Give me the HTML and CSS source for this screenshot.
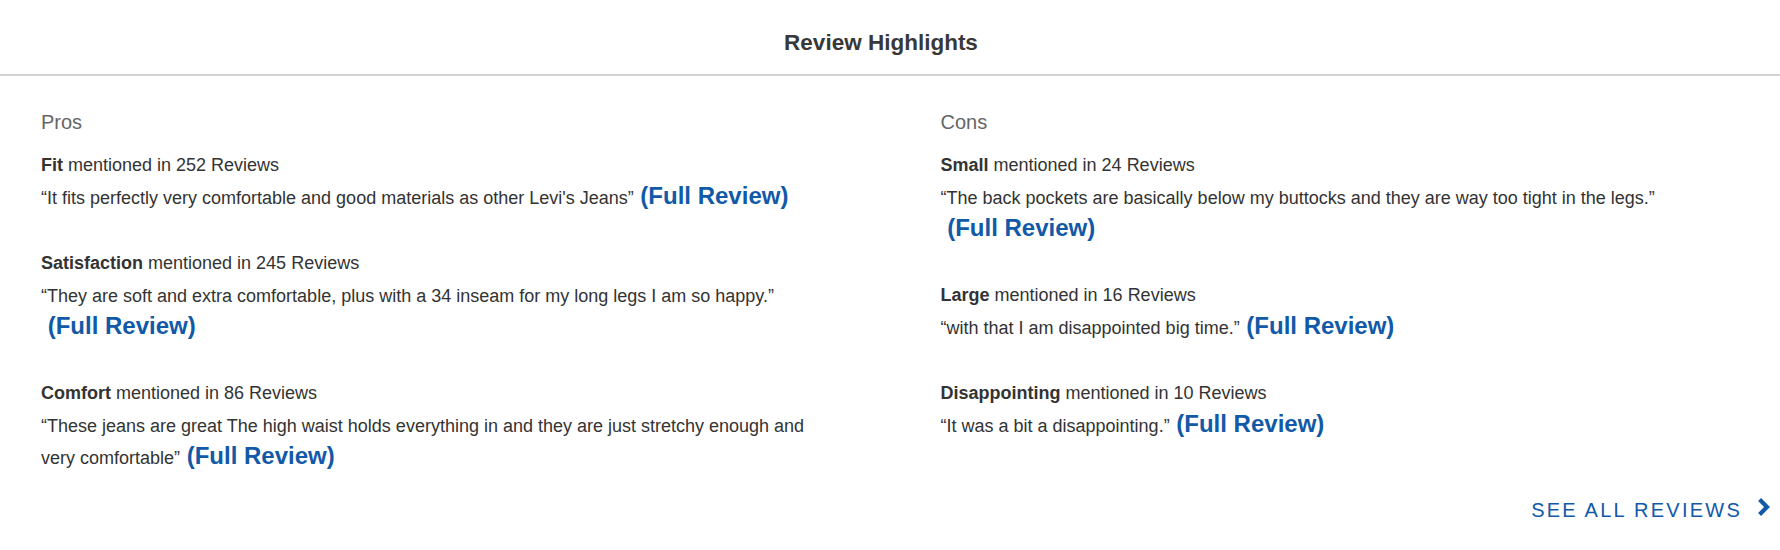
FILE: index.html
```html
<!DOCTYPE html>
<html lang="en">

  <head>
    <meta charset="UTF-8">
    <meta name="viewport" content="width=device-width, initial-scale=1.0">
    <title>Review Highlights</title>
    <link rel="stylesheet" href="styles.css">
  </head>

  <body>
    <div class="highlights">
      <h2 class="highlights-title">Review Highlights</h2>

      <div class="highlights-cols">
        <!-- pros column -->
        <div class="highlights-col">
          <h3 class="col-title">Pros</h3>

          <div class="topic">
            <p class="topic-head"><b>Fit</b> mentioned in 252 Reviews</p>
            <p class="topic-quote">“It fits perfectly very comfortable and good materials as other Levi's Jeans”<a class="full-review" href="#">&nbsp;(Full Review)</a></p>
          </div>

          <div class="topic">
            <p class="topic-head"><b>Satisfaction</b> mentioned in 245 Reviews</p>
            <p class="topic-quote">“They are soft and extra comfortable, plus with a 34 inseam for my long legs I am so happy.”<a class="full-review" href="#">&nbsp;(Full Review)</a></p>
          </div>

          <div class="topic">
            <p class="topic-head"><b>Comfort</b> mentioned in 86 Reviews</p>
            <p class="topic-quote">“These jeans are great The high waist holds everything in and they are just stretchy enough and very comfortable”<a class="full-review" href="#">&nbsp;(Full Review)</a></p>
          </div>
        </div>

        <!-- cons column -->
        <div class="highlights-col">
          <h3 class="col-title">Cons</h3>

          <div class="topic">
            <p class="topic-head"><b>Small</b> mentioned in 24 Reviews</p>
            <p class="topic-quote">“The back pockets are basically below my buttocks and they are way too tight in the legs.”<a class="full-review" href="#">&nbsp;(Full Review)</a></p>
          </div>

          <div class="topic">
            <p class="topic-head"><b>Large</b> mentioned in 16 Reviews</p>
            <p class="topic-quote">“with that I am disappointed big time.”<a class="full-review" href="#">&nbsp;(Full Review)</a></p>
          </div>

          <div class="topic">
            <p class="topic-head"><b>Disappointing</b> mentioned in 10 Reviews</p>
            <p class="topic-quote">“It was a bit a disappointing.”<a class="full-review" href="#">&nbsp;(Full Review)</a></p>
          </div>
        </div>
      </div>

      <div class="highlights-footer">
        <a class="see-all" href="#">
          <span>See all reviews</span>
          <svg class="chevron" width="14" height="18" viewBox="0 0 14 18">
            <polyline points="2.6,1.6 10,9 2.6,16.4" fill="none" stroke="currentColor" stroke-width="4.2" />
          </svg>
        </a>
      </div>
    </div>
  </body>

</html>
```

FILE: styles.css
```css
body {
  margin: 0;
  padding: 0;
  background: #fff;
  font-family: "Liberation Sans", Arial, sans-serif;
  color: #333;
}

.highlights-title {
  margin: 0;
  padding: 30px 18px 18px 0;
  font-size: 22.5px;
  line-height: 26px;
  font-weight: bold;
  text-align: center;
  color: #383838;
  border-bottom: 2px solid #d2d2d2;
}

.highlights-cols {
  display: grid;
  grid-template-columns: 1fr 1fr;
  column-gap: 102px;
  padding: 34px 42px 0 41px;
}

.col-title {
  margin: 0 0 16px;
  font-size: 20px;
  line-height: 24px;
  font-weight: normal;
  color: #666;
}

.topic {
  margin-bottom: 34px;
}

.topic:last-child {
  margin-bottom: 0;
}

.topic p {
  margin: 0;
  font-size: 18px;
}

.topic-head {
  line-height: 30px;
  margin-bottom: 2px !important;
}

.topic-quote {
  line-height: 32px;
}

/* inline-block so the link can drop to its own line */
.full-review {
  display: inline-block;
  font-size: 24px;
  line-height: 24px;
  font-weight: bold;
  color: #1259a8;
  text-decoration: none;
}

.highlights-footer {
  display: flex;
  justify-content: flex-end;
  padding: 24px 9px 0 0;
}

.see-all {
  display: flex;
  align-items: center;
  gap: 15px;
  font-size: 20px;
  line-height: 24px;
  letter-spacing: 2.25px;
  text-transform: uppercase;
  color: #1259a8;
  text-decoration: none;
}

.chevron {
  margin-bottom: 6px;
}
```
